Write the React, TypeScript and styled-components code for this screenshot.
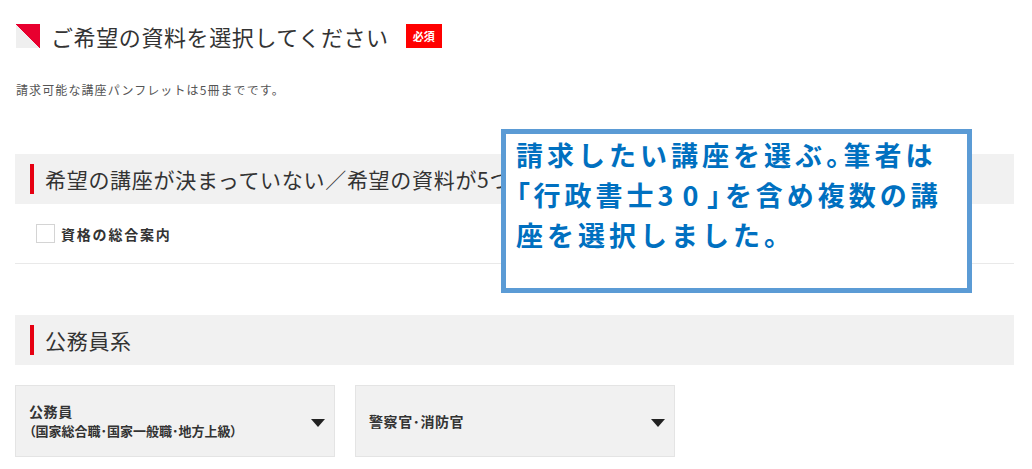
import React from 'react';
import styled, { createGlobalStyle } from 'styled-components';

const GlobalStyle = createGlobalStyle`
    body {
        margin: 0;
        background: #ffffff;
        font-family: "Noto Sans CJK JP", "Noto Sans", sans-serif;
        color: #333333;
    }
`;

type Course = {
    id: number;
    name: string;
    sub?: string;
};

const courses: Course[] = [
    { id: 1, name: "公務員", sub: "（国家総合職･国家一般職･地方上級）" },
    { id: 2, name: "警察官･消防官" },
];

const Page = styled.div`
    position: relative;
    width: 999px;
    padding: 23px 0 0 15px;
`;

const TitleRow = styled.div`
    display: flex;
    align-items: center;
    height: 26px;
`;

const TitleIcon = styled.span`
    width: 24px;
    height: 24px;
    margin-left: 1px;
    background: linear-gradient(to top right, #efefef 50%, #e8002f 50%);
`;

const Title = styled.h1`
    margin: 0 0 0 11px;
    font-size: 22px;
    font-weight: 400;
    letter-spacing: 0.6px;
    line-height: 26px;
    color: #333;
`;

const Badge = styled.span`
    margin-left: 17px;
    width: 36px;
    height: 24px;
    display: flex;
    align-items: center;
    justify-content: center;
    background: #ff0000;
    color: #fff;
    font-size: 11px;
    font-weight: 700;
`;

const Note = styled.p`
    margin: 32px 0 0 1px;
    font-size: 12px;
    line-height: 18px;
    letter-spacing: 1.1px;
    color: #555;
`;

const Band = styled.div<{ $top: number }>`
    margin-top: ${p => p.$top}px;
    height: 50px;
    background: #f1f1f1;
    display: flex;
    align-items: center;
    padding-left: 15px;
    white-space: nowrap;
    overflow: hidden;
`;

const RedBar = styled.span`
    width: 4px;
    height: 30px;
    background: #e60012;
    flex-shrink: 0;
`;

const BandText = styled.h2`
    margin: 0 0 0 11px;
    font-size: 21px;
    font-weight: 400;
    letter-spacing: 0.7px;
    color: #333;
`;

const CheckRow = styled.label`
    display: flex;
    align-items: center;
    height: 59px;
    padding-left: 21px;
    border-bottom: 1px solid #e9e9e9;
`;

const CheckBox = styled.span`
    width: 17px;
    height: 17px;
    border: 1px solid #d4d4d4;
    background: #fff;
`;

const CheckLabel = styled.span`
    margin-left: 6px;
    font-size: 14px;
    font-weight: 700;
    letter-spacing: 1.8px;
    color: #333;
`;

const CardGrid = styled.div`
    display: flex;
    gap: 20px;
    margin-top: 20px;
`;

const Card = styled.div`
    width: 320px;
    height: 72px;
    box-sizing: border-box;
    background: #f1f1f1;
    border: 1px solid #e4e4e4;
    display: flex;
    align-items: center;
    justify-content: space-between;
    padding: 0 9px 0 13px;
`;

const CardName = styled.div`
    font-size: 14px;
    font-weight: 700;
    letter-spacing: 0.6px;
    line-height: 20px;
    color: #333;
`;

const CardSub = styled.div`
    font-size: 13px;
    font-weight: 700;
    line-height: 20px;
    font-feature-settings: "palt";
    color: #333;
`;

const Arrow = styled.span`
    width: 0;
    height: 0;
    border-left: 7px solid transparent;
    border-right: 7px solid transparent;
    border-top: 8px solid #222;
    margin-top: 3px;
`;

const Callout = styled.div`
    position: absolute;
    left: 501px;
    top: 129px;
    width: 471px;
    height: 164px;
    box-sizing: border-box;
    border: 5px solid #5b9bd5;
    background: #fff;
    padding: 1px 0 0 10px;
    color: #0070c0;
    font-size: 27px;
    font-weight: 700;
    line-height: 40px;
    letter-spacing: 4px;
    white-space: nowrap;
`;

// 句読点・括弧だけ詰める
const Narrow = styled.span`
    font-feature-settings: "palt";
`;

const Digits = styled.span`
    letter-spacing: 9px;
`;

const App: React.FC = () => {
    return (
        <>
            <GlobalStyle />
            <Page>
                <TitleRow>
                    <TitleIcon />
                    <Title>ご希望の資料を選択してください</Title>
                    <Badge>必須</Badge>
                </TitleRow>
                <Note>請求可能な講座パンフレットは5冊までです。</Note>

                <Band $top={55}>
                    <RedBar />
                    <BandText>希望の講座が決まっていない／希望の資料が5つ以上の場合</BandText>
                </Band>
                <CheckRow>
                    <CheckBox />
                    <CheckLabel>資格の総合案内</CheckLabel>
                </CheckRow>

                <Band $top={51}>
                    <RedBar />
                    <BandText>公務員系</BandText>
                </Band>
                <CardGrid>
                    {courses.map(course => (
                        <Card key={course.id}>
                            <div>
                                <CardName>{course.name}</CardName>
                                {course.sub && <CardSub>{course.sub}</CardSub>}
                            </div>
                            <Arrow />
                        </Card>
                    ))}
                </CardGrid>

                <Callout>
                    請求したい講座を選ぶ<Narrow>。</Narrow>筆者は<br />
                    <Narrow>「</Narrow>行政書士<Digits>30</Digits><Narrow>」</Narrow>を含め複数の講<br />
                    座を選択しました。
                </Callout>
            </Page>
        </>
    );
};

export default App;
